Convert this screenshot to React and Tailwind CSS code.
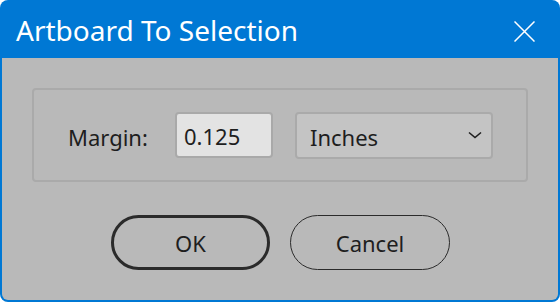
export default function App() {
  return (
    <div className="w-[560px] h-[302px] bg-white" style={{ fontFamily: '"Noto Sans", "Open Sans", sans-serif' }}>
      <div className="w-full h-full rounded-[8px] bg-[#0078d4] flex flex-col">
        <div className="h-[58px] shrink-0 flex items-center justify-between pl-[16px] pr-[25px]">
          <span className="text-white text-[28px] leading-none mt-[2px]">Artboard To Selection</span>
          <svg width="21" height="21" viewBox="0 0 21 21" className="block mt-[5px]">
            <path d="M0.5 0.5 L20.5 20.5 M20.5 0.5 L0.5 20.5" stroke="white" strokeWidth="1.5" fill="none" />
          </svg>
        </div>
        <div className="flex-1 mx-[2px] mb-[2px] bg-[#b9b9b9] rounded-b-[6px] flex flex-col px-[30px] pt-[30px]">
          <div className="h-[94px] border-2 border-[#aaaaaa] rounded-[4px] flex items-center pl-[34px] text-[#1e1e1e]">
            <span className="w-[107px] text-[22px] leading-none mt-[3px]">Margin:</span>
            <div className="w-[98px] h-[46px] bg-[#e3e3e3] border-2 border-[#a9a9a9] rounded-[4px] flex items-center pl-[7px] text-[22px] leading-none">
              <span className="mt-[1px]">0.125</span>
            </div>
            <div className="ml-[22px] w-[198px] h-[47px] bg-[#c4c4c4] border-2 border-[#aaaaaa] rounded-[4px] flex items-center justify-between pl-[13px] pr-[9px] text-[22px] leading-none">
              <span className="mt-[3px]">Inches</span>
              <svg width="14" height="8" viewBox="0 0 14 8" className="block">
                <path d="M1 1.5 L7 6.5 L13 1.5" stroke="#1e1e1e" strokeWidth="1.6" fill="none" />
              </svg>
            </div>
          </div>
          <div className="flex justify-center gap-[20px] mt-[33px] ml-[1px]">
            <button className="w-[159px] h-[55px] rounded-full border-[3px] border-[#2b2b2b] text-[22px] leading-none text-[#1e1e1e] flex items-center justify-center">
              OK
            </button>
            <button className="w-[160px] h-[55px] rounded-full border-[1.5px] border-[#2b2b2b] text-[22px] leading-none text-[#1e1e1e] flex items-center justify-center">
              Cancel
            </button>
          </div>
        </div>
      </div>
    </div>
  );
}
